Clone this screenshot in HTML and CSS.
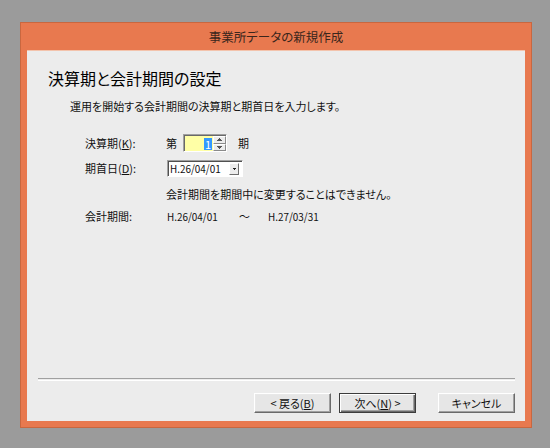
FILE: index.html
```html
<!DOCTYPE html>
<html lang="ja">
<head>
<meta charset="utf-8">
<title>事業所データの新規作成</title>
<link rel="stylesheet" href="styles.css">
</head>
<body>
<div class="window">
  <div class="titlebar">事業所データの新規作成</div>
  <div class="client">
    <h1 class="heading">決算期と会計期間の設定</h1>
    <p class="intro">運用を開始する会計期間の決算期と期首日を入力します。</p>
    <div class="form">
      <div class="row row1">
        <span class="label">決算期(<u>K</u>):</span>
        <span class="field">
          <span class="kanji">第</span>
          <span class="spin">
            <span class="spin-value"><span class="sel">1</span></span>
            <span class="spin-btns">
              <span class="spin-btn"><svg width="5" height="3" viewBox="0 0 5 3"><path d="M2 0h1v1h1v1h1v1H0V2h1V1h1z" fill="#555"/></svg></span>
              <span class="spin-btn"><svg width="5" height="3" viewBox="0 0 5 3"><path d="M0 0h5v1H4v1H3v1H2V2H1V1H0z" fill="#555"/></svg></span>
            </span>
          </span>
          <span class="kanji after">期</span>
        </span>
      </div>
      <div class="row row2">
        <span class="label">期首日(<u>D</u>):</span>
        <span class="field">
          <span class="combo">
            <span class="combo-text"><span class="num">H.26/04/01</span></span>
            <span class="combo-btn"><svg width="3" height="2" viewBox="0 0 3 2"><path d="M0 0h3v1H2v1H1V1H0z" fill="#222"/></svg></span>
          </span>
        </span>
      </div>
      <div class="row row3">
        <span class="label"></span>
        <span class="field">会計期間を期間中に変更することはできません。</span>
      </div>
      <div class="row row4">
        <span class="label">会計期間:</span>
        <span class="field">
          <span class="date"><span class="num">H.26/04/01</span></span>
          <span class="tilde">～</span>
          <span class="date"><span class="num">H.27/03/31</span></span>
        </span>
      </div>
    </div>
    <div class="footer">
      <div class="separator"></div>
      <div class="buttons">
        <button class="btn">&lt; 戻る(<u>B</u>)</button>
        <button class="btn default">次へ(<u>N</u>) &gt;</button>
        <button class="btn cancel">キャンセル</button>
      </div>
    </div>
  </div>
</div>
</body>
</html>
```
FILE: styles.css
```css
html, body {
  margin: 0;
  padding: 0;
}
body {
  background: #9b9b9b;
  width: 550px;
  height: 448px;
  overflow: hidden;
  font-family: "Noto Sans CJK JP", "Noto Sans", sans-serif;
  font-feature-settings: "palt";
  color: #111;
}
.window {
  box-sizing: border-box;
  margin: 22px 0 0 20px;
  width: 512px;
  height: 406px;
  background: #e8794f;
  border: 1px solid #c9673f;
  display: flex;
  flex-direction: column;
}
.titlebar {
  height: 27px;
  line-height: 27px;
  text-align: center;
  font-size: 12.5px;
  color: #3a261c;
}
.client {
  box-sizing: border-box;
  margin: 0 6px 6px 6px;
  height: 371px;
  background: #ececec;
  border-top: 1px solid #f3c3ac;
  display: flex;
  flex-direction: column;
}
.heading {
  margin: 17px 0 0 21px;
  font-size: 16px;
  line-height: 20px;
  font-weight: normal;
  color: #000;
}
.intro {
  margin: 11px 0 0 43px;
  font-size: 11px;
  line-height: 14px;
}
.form {
  display: flex;
  flex-direction: column;
  padding-left: 58px;
  font-size: 11px;
}
.row {
  display: flex;
  align-items: center;
  height: 20px;
}
.row1 { margin-top: 20px; }
.row2 { margin-top: 5px; }
.row3 { margin-top: 6px; }
.row4 { margin-top: 2px; }
.label {
  width: 81px;
  flex: none;
}
.field {
  display: flex;
  align-items: center;
}
.kanji {
  width: 11px;
}
.kanji.after {
  margin-left: 11px;
}
.spin {
  box-sizing: border-box;
  margin-left: 6px;
  width: 44px;
  height: 18px;
  display: flex;
  border: 1px solid;
  border-color: #a0a0a0 #fff #fff #a0a0a0;
  box-shadow: inset 1px 1px #696969;
  background: #ffffa6;
}
.spin-value {
  flex: 1;
  display: flex;
  justify-content: flex-end;
  align-items: center;
  padding: 1px 1px 0 0;
}
.sel {
  background: #3399ff;
  color: #fff;
  line-height: 12px;
  height: 12px;
  padding: 0 1px;
  font-size: 11px;
}
.spin-btns {
  width: 13px;
  display: flex;
  flex-direction: column;
  padding: 1px 0 0 0;
}
.spin-btn {
  box-sizing: border-box;
  flex: 1;
  display: flex;
  align-items: center;
  justify-content: center;
  background: #ececec;
  border: 1px solid;
  border-color: #fff #8a8a8a #8a8a8a #fff;
}
.combo {
  box-sizing: border-box;
  margin-left: 1px;
  width: 76px;
  height: 17px;
  display: flex;
  align-items: center;
  background: #fff;
  border: 1px solid;
  border-color: #a0a0a0 #fff #fff #a0a0a0;
  box-shadow: inset 1px 1px #505050;
}
.combo-text {
  flex: 1;
  padding-left: 2px;
  overflow: hidden;
}
.num {
  display: inline-block;
  transform: scaleX(0.9);
  transform-origin: 0 50%;
  white-space: nowrap;
}
.combo-btn {
  box-sizing: border-box;
  width: 10px;
  height: 12px;
  margin-right: 3px;
  margin-top: 1px;
  display: flex;
  align-items: center;
  justify-content: center;
  background: #ececec;
  border: 1px solid;
  border-color: #fff #6e6e6e #6e6e6e #fff;
}
.date {
  width: 73px;
  padding-left: 1px;
  box-sizing: border-box;
}
.tilde {
  width: 28px;
}
.footer {
  margin-top: auto;
  display: flex;
  flex-direction: column;
  padding-bottom: 8px;
}
.separator {
  margin: 0 10px 0 11px;
  height: 1px;
  border-top: 1px solid #a0a0a0;
  border-bottom: 1px solid #fff;
}
.buttons {
  margin-top: 12px;
  display: flex;
  justify-content: flex-end;
  padding-right: 10px;
}
.btn {
  box-sizing: border-box;
  width: 77px;
  height: 20px;
  padding: 0;
  margin: 0;
  font-family: "Noto Sans CJK JP", "Noto Sans", sans-serif;
  font-feature-settings: "palt";
  font-size: 11px;
  line-height: 16px;
  color: #111;
  background: #e6e6e6;
  border: 1px solid;
  border-color: #fff #6a6a6a #6a6a6a #fff;
  box-shadow: inset -1px -1px #a0a0a0, inset 1px 1px #e8e8e8;
}
.btn + .btn {
  margin-left: 8px;
}
.btn.default {
  border-color: #3c3c3c;
  box-shadow: inset 1px 1px #fff, inset -1px -1px #6a6a6a, inset -2px -2px #a0a0a0;
}
.btn.cancel {
  margin-left: 22px;
}
u {
  text-decoration: underline;
  text-underline-offset: 1px;
}
```
